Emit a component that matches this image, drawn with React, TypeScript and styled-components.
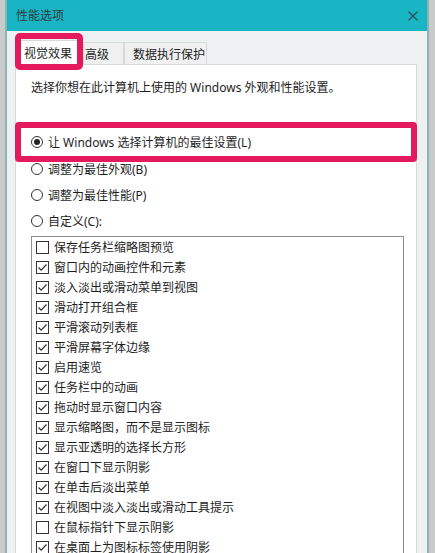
import styled, { createGlobalStyle } from "styled-components";
import React from "react";

const GlobalStyle = createGlobalStyle`
  html, body {
    margin: 0;
    padding: 0;
    background: #c9cbcb;
  }
  body {
    font-family: "Noto Sans", "Noto Sans CJK SC", sans-serif;
  }
`;

const checkItems = [
  { label: "保存任务栏缩略图预览", checked: false },
  { label: "窗口内的动画控件和元素", checked: true },
  { label: "淡入淡出或滑动菜单到视图", checked: true },
  { label: "滑动打开组合框", checked: true },
  { label: "平滑滚动列表框", checked: true },
  { label: "平滑屏幕字体边缘", checked: true },
  { label: "启用速览", checked: true },
  { label: "任务栏中的动画", checked: true },
  { label: "拖动时显示窗口内容", checked: true },
  { label: "显示缩略图，而不是显示图标", checked: true },
  { label: "显示亚透明的选择长方形", checked: true },
  { label: "在窗口下显示阴影", checked: true },
  { label: "在单击后淡出菜单", checked: true },
  { label: "在视图中淡入淡出或滑动工具提示", checked: true },
  { label: "在鼠标指针下显示阴影", checked: false },
  { label: "在桌面上为图标标签使用阴影", checked: true },
];

const radioItems = ["调整为最佳外观(B)", "调整为最佳性能(P)", "自定义(C):"];

const Radio = ({ checked }: { checked?: boolean }) => (
  <RadioCircle>{checked && <RadioDot />}</RadioCircle>
);

const CheckBox = ({ checked }: { checked: boolean }) => (
  <Box>
    {checked && (
      <svg width="11" height="11" viewBox="0 0 11 11">
        <polyline
          points="1.5,5.5 4.2,8.2 9.5,2.5"
          fill="none"
          stroke="#333"
          strokeWidth="1.2"
        />
      </svg>
    )}
  </Box>
);

const App = () => {
  return (
    <Screen>
      <GlobalStyle />
      <Window>
        <TitleBar>
          <Title>性能选项</Title>
          <svg width="10" height="10" viewBox="0 0 10 10">
            <path d="M0.5 0.5 L9.5 9.5 M9.5 0.5 L0.5 9.5" stroke="#2c4a4f" strokeWidth="1.1" />
          </svg>
        </TitleBar>
        <Body>
          <TabRow>
            <Tab $active $width={68} $pad={8}>视觉效果</Tab>
            <Tab $width={41} $pad={1}>高级</Tab>
            <Tab $width={83} $pad={8}>数据执行保护</Tab>
            <Mark />
          </TabRow>
          <Panel>
            <Intro>选择你想在此计算机上使用的 Windows 外观和性能设置。</Intro>
            <Highlight>
              <OptionRow>
                <Radio checked />
                <span>让 Windows 选择计算机的最佳设置(L)</span>
              </OptionRow>
            </Highlight>
            <Options>
              {radioItems.map((item, index) => (
                <OptionRow key={index}>
                  <Radio />
                  <span>{item}</span>
                </OptionRow>
              ))}
            </Options>
            <ListBox>
              {checkItems.map((item, index) => (
                <CheckRow key={index}>
                  <CheckBox checked={item.checked} />
                  <span>{item.label}</span>
                </CheckRow>
              ))}
            </ListBox>
          </Panel>
        </Body>
      </Window>
    </Screen>
  );
};

export default App;

const Screen = styled.div`
  width: 435px;
  height: 553px;
  overflow: hidden;
  padding-left: 5px;
  box-sizing: border-box;
`;

const Window = styled.div`
  width: 424px;
  height: 600px;
  box-sizing: border-box;
  border-left: 2px solid #8db3b7;
  border-right: 2px solid #8db3b7;
  background: #eef1f1;
`;

const TitleBar = styled.div`
  height: 31px;
  background: #19b5c5;
  display: flex;
  align-items: center;
  justify-content: space-between;
  padding: 0 9px;
`;

const Title = styled.span`
  font-size: 12px;
  color: #2b3d40;
  line-height: 16px;
`;

const Body = styled.div`
  padding: 11px 10px 0 8px;
`;

const TabRow = styled.div`
  position: relative;
  display: flex;
  align-items: flex-end;
  height: 22px;
`;

const Tab = styled.div<{ $active?: boolean; $width: number; $pad: number }>`
  width: ${(p) => p.$width}px;
  height: ${(p) => (p.$active ? 25 : 22)}px;
  box-sizing: border-box;
  padding-left: ${(p) => p.$pad}px;
  display: flex;
  align-items: center;
  font-size: 12px;
  color: #1e1e1e;
  background: ${(p) => (p.$active ? "#ffffff" : "#f0f0f0")};
  border: 1px solid #d9d9d9;
  border-bottom: none;
  margin-bottom: ${(p) => (p.$active ? -1 : 0)}px;
  position: relative;
  z-index: ${(p) => (p.$active ? 1 : 0)};
`;

const Mark = styled.div`
  position: absolute;
  left: 0;
  top: -9px;
  width: 68px;
  height: 37px;
  box-sizing: border-box;
  border: 6px solid #e5195d;
  border-radius: 5px;
  z-index: 2;
`;

const Panel = styled.div`
  background: #ffffff;
  border: 1px solid #d9d9d9;
  padding: 15px 12px 0 15px;
  height: 600px;
`;

const Intro = styled.div`
  font-size: 12px;
  line-height: 16px;
  color: #1e1e1e;
`;

const Highlight = styled.div`
  margin: 26px -13px 0 -16px;
  border: 6px solid #e5195d;
  border-radius: 4px;
  padding-left: 10px;
  position: relative;
`;

const Options = styled.div`
  margin-top: -6px;
`;

const OptionRow = styled.div`
  height: 26px;
  display: flex;
  align-items: center;
  gap: 5px;
  font-size: 12px;
  color: #1e1e1e;
  ${Highlight} & {
    height: 28px;
  }
`;

const RadioCircle = styled.div`
  width: 12px;
  height: 12px;
  box-sizing: border-box;
  border: 1px solid #333;
  border-radius: 50%;
  background: #fff;
  display: flex;
  align-items: center;
  justify-content: center;
  flex-shrink: 0;
`;

const RadioDot = styled.div`
  width: 6px;
  height: 6px;
  border-radius: 50%;
  background: #222;
`;

const ListBox = styled.div`
  margin-top: 2px;
  border: 1px solid #8e9090;
  height: 400px;
`;

const CheckRow = styled.div`
  height: 20px;
  display: flex;
  align-items: center;
  gap: 5px;
  padding-left: 4px;
  font-size: 12px;
  color: #1e1e1e;
`;

const Box = styled.div`
  width: 13px;
  height: 13px;
  box-sizing: border-box;
  border: 1px solid #333;
  background: #fff;
  display: flex;
  align-items: center;
  justify-content: center;
  flex-shrink: 0;
`;
